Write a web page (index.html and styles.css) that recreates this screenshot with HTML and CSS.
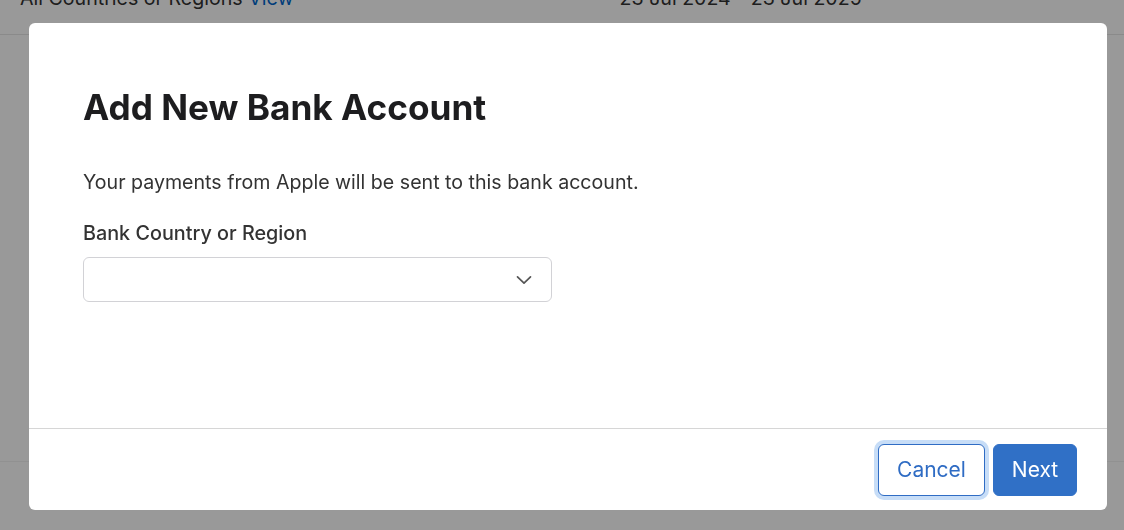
FILE: index.html
```html
<!DOCTYPE html>
<html lang="en">
<head>
<meta charset="utf-8">
<title>Add New Bank Account</title>
<link rel="stylesheet" href="styles.css">
</head>
<body>
<div class="page">
  <div class="page-row">
    <div class="page-cell">All Countries or Regions <a class="link" href="#">View</a></div>
    <div class="page-date">23 Jul 2024 - 23 Jul 2025</div>
  </div>
  <div class="page-block"></div>
</div>
<div class="overlay">
  <div class="modal" role="dialog" aria-labelledby="title">
    <div class="modal-body">
      <h1 id="title" class="title">Add New Bank Account</h1>
      <p class="intro">Your payments from Apple will be sent to this bank account.</p>
      <label class="label" for="country">Bank Country or Region</label>
      <div class="select">
        <span class="select-value" id="country"></span>
        <svg class="chevron" width="16" height="10" viewBox="0 0 16 10" aria-hidden="true">
          <path d="M1.5 1.8 L8 8.2 L14.5 1.8" fill="none" stroke="#555" stroke-width="1.7" stroke-linecap="round" stroke-linejoin="round"/>
        </svg>
      </div>
    </div>
    <div class="modal-footer">
      <button class="btn btn-secondary" type="button">Cancel</button>
      <button class="btn btn-primary" type="button">Next</button>
    </div>
  </div>
</div>
</body>
</html>
```

FILE: styles.css
```css
* { box-sizing: border-box; }
html, body { margin: 0; padding: 0; height: 100%; }
body {
  background: #ffffff;
  font-family: Inter, "Liberation Sans", Arial, sans-serif;
  color: #1d1d1f;
  overflow: hidden;
}
.page { width: 100%; }
.page-row {
  height: 35px;
  border-bottom: 1px solid #e6e6e6;
  display: flex;
  align-items: flex-start;
  overflow: hidden;
  padding-left: 20px;
}
.page-cell, .page-date {
  margin-top: -14px;
  font-size: 19.6px;
  line-height: 24px;
  color: #333;
}
.page-date { margin-left: 326px; }
.link { color: #0066cc; text-decoration: none; }
.page-block {
  height: 427px;
  border-bottom: 1px solid #f2f2f2;
}
.overlay {
  position: fixed;
  inset: 0;
  background: rgba(0, 0, 0, 0.4);
  padding: 23px 17px 20px 29px;
  display: flex;
}
.modal {
  flex: 1;
  background: #fff;
  border-radius: 6px;
  display: flex;
  flex-direction: column;
  overflow: hidden;
}
.modal-body {
  flex: 1;
  padding: 62px 54px 0 54px;
}
.title {
  margin: 0;
  font-size: 35.2px;
  line-height: 44px;
  font-weight: 700;
  color: #1d1d1f;
}
.intro {
  margin: 41px 0 0;
  font-size: 19.6px;
  line-height: 24px;
  color: #333;
}
.label {
  display: block;
  margin-top: 27px;
  font-size: 19.8px;
  line-height: 24px;
  font-weight: 500;
  color: #333;
}
.select {
  margin-top: 12px;
  width: 469px;
  height: 45px;
  border: 1px solid #d2d2d6;
  border-radius: 6px;
  display: flex;
  align-items: center;
  justify-content: space-between;
  padding: 0 19px 0 14px;
}
.chevron { display: block; }
.modal-footer {
  border-top: 1px solid #d6d6d6;
  height: 82px;
  display: flex;
  justify-content: flex-end;
  align-items: center;
  gap: 8px;
  padding: 0 30px 0 0;
}
.btn {
  height: 52px;
  border-radius: 6px;
  font-family: inherit;
  font-size: 21px;
  padding: 0 12px;
  cursor: pointer;
}
.btn-secondary {
  width: 107px;
  background: #fff;
  color: #2f6cc4;
  border: 1.5px solid #2f6cc4;
  box-shadow: 0 0 0 4px #c7ddf7;
}
.btn-primary {
  width: 84px;
  background: #3070c6;
  color: #fff;
  border: 1px solid #3070c6;
}
```
